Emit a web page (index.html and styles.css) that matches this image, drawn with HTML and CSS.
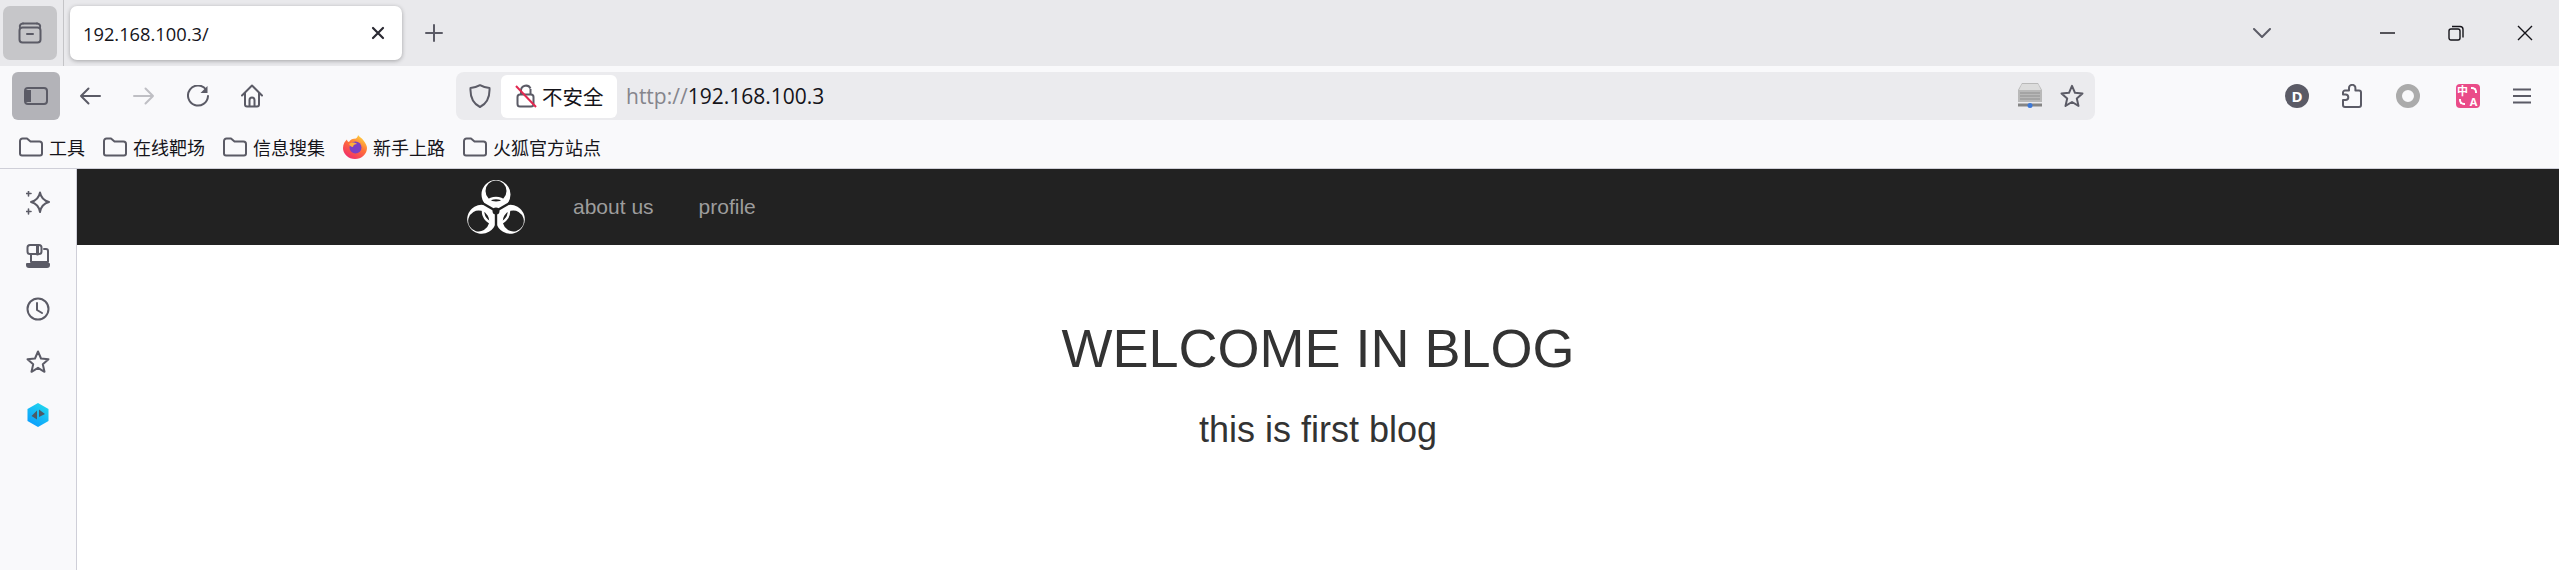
FILE: index.html
```html
<!DOCTYPE html>
<html lang="en">
<head>
    <meta charset="UTF-8">
    <title>192.168.100.3/</title>
    <link rel="stylesheet" href="styles.css">
</head>
<body>
    <!-- tab strip -->
    <div class="tabbar">
        <div class="tabs-btn">
            <svg width="24" height="24" viewBox="0 0 24 24" class="ico"><rect x="1.500" y="6.500" width="21" height="15" rx="3"/><path d="M5 2.500h14M9 13h6" /><path d="M5 2.500a3 3 0 0 0-3 4M19 2.500a3 3 0 0 1 3 4"/></svg>
        </div>
        <div class="tab">
            <span class="tab-title">192.168.100.3/</span>
            <svg width="14" height="14" viewBox="0 0 14 14" class="ico ico-dark"><path d="M2 2l10 10M12 2L2 12"/></svg>
        </div>
        <svg class="ico newtab" width="18" height="18" viewBox="0 0 18 18"><path d="M9 1v16M1 9h16"/></svg>
        <div class="spacer"></div>
        <svg class="ico chevron" width="18" height="10" viewBox="0 0 18 10"><path d="M1 1l8 8 8-8"/></svg>
        <svg class="win win-min" width="15" height="2" viewBox="0 0 15 2"><path d="M0 1h15"/></svg>
        <svg class="win win-max" width="16" height="16" viewBox="0 0 16 16"><rect x="1" y="4" width="11" height="11" rx="2"/><path d="M4 1.500h8a3 3 0 0 1 3 3v8"/></svg>
        <svg class="win win-close" width="16" height="16" viewBox="0 0 16 16"><path d="M1 1l14 14M15 1L1 15"/></svg>
    </div>

    <!-- nav toolbar -->
    <div class="toolbar">
        <div class="sidebar-btn">
            <svg width="24" height="18" viewBox="0 0 24 18"><rect x="1" y="1" width="22" height="16" rx="3" fill="#b3b3b8" stroke="#5b5b66" stroke-width="2"/><path d="M2 3h5v12H2z" fill="#5b5b66"/></svg>
        </div>
        <div class="nav-btn"><svg class="ico" width="22" height="18" viewBox="0 0 22 18"><path d="M21 9H2M9.500 1.500L2 9l7.500 7.500"/></svg></div>
        <div class="nav-btn"><svg class="ico ico-off" width="22" height="18" viewBox="0 0 22 18"><path d="M1 9h19M12.500 1.500L20 9l-7.500 7.500"/></svg></div>
        <div class="nav-btn"><svg class="ico" width="22" height="22" viewBox="0 0 22 22"><path d="M19 4.500A10 10 0 1 0 21 11"/><path d="M20.500 1v7h-7z" fill="#5b5b66" stroke="none"/></svg></div>
        <div class="nav-btn"><svg class="ico" width="22" height="24" viewBox="0 0 22 24"><path d="M1 11.500L11 1.500l10 10M4 9v11.500a2 2 0 0 0 2 2h10a2 2 0 0 0 2-2V9M8.500 22.500V16a2.500 2.500 0 0 1 5 0v6.500"/></svg></div>

        <div class="urlbar">
            <svg class="ico shield" width="22" height="24" viewBox="0 0 22 24"><path d="M11 1.200c3 1.800 6 2.600 9.500 2.800.4 8-1.500 15-9.500 19C3 19 1.100 12 1.500 4 5 3.800 8 3 11 1.200z"/></svg>
            <div class="chip">
                <svg width="22" height="24" viewBox="0 0 22 24"><path d="M6 10V6.500a5 5 0 0 1 9.500-2" fill="none" stroke="#5b5b66" stroke-width="2"/><path d="M15.500 5v5" fill="none" stroke="#5b5b66" stroke-width="2"/><rect x="2.500" y="10.500" width="16" height="12" rx="2.500" fill="none" stroke="#5b5b66" stroke-width="2"/><path d="M1 2l20 21" stroke="#e22850" stroke-width="2"/></svg>
                <span>不安全</span>
            </div>
            <span class="url"><span class="url-scheme">http://</span>192.168.100.3</span>
            <div class="spacer"></div>
            <svg class="server" width="24" height="26" viewBox="0 0 24 26">
                <path d="M4 0h16l4 7v12H0V7z" fill="#b9b9b9"/>
                <path d="M4 1h16l3 6H1z" fill="#dcdcdc"/>
                <path d="M2 10h20M2 13h20M2 16h20" stroke="#8f8f8f" stroke-width="1"/>
                <rect x="0" y="20.500" width="24" height="3" fill="#858585"/>
                <circle cx="12" cy="22.500" r="2.500" fill="#3b78d8"/>
            </svg>
            <svg class="ico star" width="24" height="24" viewBox="0 0 24 24"><path d="M12 1.800l3 7 7.500.7-5.700 5 1.700 7.400-6.500-3.900-6.500 3.900 1.700-7.400-5.700-5L9 8.800z"/></svg>
        </div>

        <div class="ext ext-account">D</div>
        <svg class="ext ico" width="20" height="24" viewBox="0 0 20 24"><path d="M7 6.500V4a3.200 3.200 0 0 1 6.400 0v2.500h3.600a2 2 0 0 1 2 2V21a2 2 0 0 1-2 2H3a2 2 0 0 1-2-2v-5h2.500a2.800 2.800 0 0 0 0-5.600H1V8.500a2 2 0 0 1 2-2z"/></svg>
        <div class="ext ext-ring"></div>
        <div class="ext ext-translate">
            <span class="tr-zh">中</span>
            <span class="tr-en">A</span>
        </div>
        <svg class="ext ico menu" width="18" height="16" viewBox="0 0 18 16"><path d="M0 1.500h18M0 8h18M0 14.500h18"/></svg>
    </div>

    <!-- bookmarks -->
    <div class="bookmarks">
        <a class="bookmark"><svg class="ico folder" width="24" height="20" viewBox="0 0 24 20"><path d="M1 4a2.500 2.500 0 0 1 2.500-2.500h4.500l3.500 3h9a2.500 2.500 0 0 1 2.500 2.500v9.500a2 2 0 0 1-2 2H3a2 2 0 0 1-2-2z"/></svg>工具</a>
        <a class="bookmark"><svg class="ico folder" width="24" height="20" viewBox="0 0 24 20"><path d="M1 4a2.500 2.500 0 0 1 2.500-2.500h4.500l3.500 3h9a2.500 2.500 0 0 1 2.500 2.500v9.500a2 2 0 0 1-2 2H3a2 2 0 0 1-2-2z"/></svg>在线靶场</a>
        <a class="bookmark"><svg class="ico folder" width="24" height="20" viewBox="0 0 24 20"><path d="M1 4a2.500 2.500 0 0 1 2.500-2.500h4.500l3.500 3h9a2.500 2.500 0 0 1 2.500 2.500v9.500a2 2 0 0 1-2 2H3a2 2 0 0 1-2-2z"/></svg>信息搜集</a>
        <a class="bookmark"><svg class="firefox" width="24" height="24" viewBox="0 0 24 24">
            <defs>
                <linearGradient id="fx" x1="0.800" y1="0" x2="0.200" y2="1"><stop offset="0" stop-color="#ffdc3e"/><stop offset="0.450" stop-color="#ff7139"/><stop offset="1" stop-color="#f0266f"/></linearGradient>
            </defs>
            <path d="M15 0c1 2 4 3 5.500 5.500C23 8.500 24 11 24 13a12 11 0 0 1-24 0C0 9 2 6 4 4.500 4 6 5 7 6 7c1-2.500 4-3.500 7-3.500C14 2.500 15 1.500 15 0z" fill="url(#fx)"/>
            <circle cx="12.500" cy="12.500" r="6" fill="#7b3fc4"/>
            <path d="M6 9c2-2 6-2 8 0-2 0-4 1-4 3-2 0-3-1-4-3z" fill="#ffb03a"/>
        </svg>新手上路</a>
        <a class="bookmark"><svg class="ico folder" width="24" height="20" viewBox="0 0 24 20"><path d="M1 4a2.500 2.500 0 0 1 2.500-2.500h4.500l3.500 3h9a2.500 2.500 0 0 1 2.500 2.500v9.500a2 2 0 0 1-2 2H3a2 2 0 0 1-2-2z"/></svg>火狐官方站点</a>
    </div>

    <div class="browser-body">
        <!-- firefox sidebar -->
        <div class="sidebar">
            <div class="side-item"><svg class="ico" width="24" height="24" viewBox="0 0 24 24"><path d="M14 1.500c1 5.500 3.500 8 9 9.500-5.500 1.500-8 4-9 10-1-6-3.500-8.500-9-10 5.500-1.500 8-4 9-9.500z"/><path d="M2.500 0v5M0 2.500h5M2.500 18v5M0 20.500h5" stroke-width="1.600"/></svg></div>
            <div class="side-item"><svg class="ico" width="24" height="24" viewBox="0 0 24 24"><rect x="1.500" y="1" width="14" height="9" rx="2.500"/><path d="M11.500 1v9" stroke-width="3"/><path d="M18 5h2a2 2 0 0 1 2 2v11H5v-8"/><path d="M1 20h22v1a2 2 0 0 1-2 2H3a2 2 0 0 1-2-2z" fill="#5b5b66"/></svg></div>
            <div class="side-item"><svg class="ico" width="24" height="24" viewBox="0 0 24 24"><circle cx="12" cy="12" r="10.500"/><path d="M11 6v7l5 3"/></svg></div>
            <div class="side-item"><svg class="ico" width="24" height="24" viewBox="0 0 24 24"><path d="M12 1.500l3 7 7.500.7-5.700 5 1.700 7.600-6.500-4-6.500 4 1.700-7.600-5.700-5L9 8.500z"/></svg></div>
            <div class="side-item"><svg width="22" height="24" viewBox="0 0 22 24">
                <defs><linearGradient id="hx" x1="0.800" y1="0" x2="0.200" y2="1"><stop offset="0" stop-color="#22d8ec"/><stop offset="1" stop-color="#0a9bff"/></linearGradient></defs>
                <path d="M11 0l10.500 6v12L11 24 .5 18V6z" fill="url(#hx)"/>
                <path d="M10 7.500v9L4.500 13zM12 6.500l6 4.500-6 3z" fill="#4d5a66"/>
            </svg></div>
        </div>

        <!-- the page itself -->
        <div class="page">
            <nav class="site-nav">
                <svg class="logo" width="58" height="54" viewBox="0 0 58 54">
                    <defs>
                        <path id="lobe" fill="#fff" fill-rule="evenodd" d="M-14.500-16.500a14.500 14.500 0 1 0 29 0a14.500 14.500 0 1 0-29 0zM-10.500-20a10.500 10.500 0 1 0 21 0a10.500 10.500 0 1 0-21 0z"/>
                        <path id="gap" d="M0 0V-18" stroke="#222" stroke-width="2.400"/>
                    </defs>
                    <g transform="translate(29 31)">
                        <use href="#lobe"/>
                        <use href="#lobe" transform="rotate(120)"/>
                        <use href="#lobe" transform="rotate(240)"/>
                        <circle r="13" fill="none" stroke="#fff" stroke-width="2.500"/>
                        <use href="#gap" transform="rotate(60)"/>
                        <use href="#gap" transform="rotate(180)"/>
                        <use href="#gap" transform="rotate(300)"/>
                        <circle r="3.500" fill="#222"/>
                    </g>
                </svg>
                <a class="site-link">about us</a>
                <a class="site-link">profile</a>
            </nav>
            <div class="welcome">
                <h1>WELCOME IN BLOG</h1>
                <p>this is first blog</p>
            </div>
        </div>
    </div>
</body>
</html>
```

FILE: styles.css
```css
* { box-sizing: border-box; }
html, body { margin: 0; height: 570px; overflow: hidden; }
body { font-family: "Open Sans", "Noto Sans CJK SC", sans-serif; background: #f9f9fb; color: #15141a; }
svg { display: block; flex: none; }
.spacer { flex: 1; }

.ico { fill: none; stroke: #5b5b66; stroke-width: 2; stroke-linecap: round; stroke-linejoin: round; }
.ico-dark { stroke: #2b2a33; stroke-width: 2.2; }
.ico-off { stroke: #bfbfc4; }

.tabbar { height: 66px; background: #e9e9ec; display: flex; align-items: center; padding-left: 3px; }
.tabs-btn { width: 54px; height: 54px; border-radius: 7px; background: #c6c6c9; display: flex; align-items: center; justify-content: center; margin-right: 13px; position: relative; }
.tabs-btn::after { content: ""; position: absolute; right: -7px; top: -6px; width: 1px; height: 66px; background: #c4c4c7; }
.tab { width: 332px; height: 54px; background: #fff; border-radius: 7px; box-shadow: 0 1px 4px rgba(0, 0, 0, .3); display: flex; align-items: center; justify-content: space-between; padding: 0 17px 0 13px; font-size: 18.300px; }
.newtab { margin-left: 23px; }
.chevron { margin-right: 109px; }
.win { fill: none; stroke: #15141a; stroke-width: 1.400; }
.win-min { margin-right: 53px; }
.win-max { margin-right: 53px; }
.win-close { margin-right: 26px; }

.toolbar { height: 60px; display: flex; align-items: center; padding-left: 12px; }
.sidebar-btn { width: 48px; height: 48px; border-radius: 6px; background: #b3b3b8; display: flex; align-items: center; justify-content: center; margin-right: 3px; }
.nav-btn { width: 54px; display: flex; justify-content: center; }
.urlbar { width: 1639px; height: 48px; margin-left: 177px; background: #ebebee; border-radius: 8px; display: flex; align-items: center; padding-left: 13px; }
.shield { margin-right: 10px; }
.chip { width: 116px; height: 43px; background: #fff; border-radius: 6px; display: flex; align-items: center; gap: 5px; padding-left: 14px; font-size: 20.500px; }
.url { margin-left: 9px; font-size: 21px; }
.url-scheme { color: #85858c; }
.server { margin-right: 18px; }
.star { margin-right: 11px; }

.ext { flex: none; }
.ext-account { width: 24px; height: 24px; margin-left: 190px; border-radius: 50%; background: #5b5b66; color: #fff; font-size: 15px; font-weight: 700; line-height: 24px; text-align: center; }
.ext + svg.ext { margin-left: 33px; }
.ext-ring { width: 24px; height: 24px; margin-left: 34px; border-radius: 50%; border: 6px solid #ababab; }
.ext-translate { width: 24px; height: 24px; margin-left: 36px; padding: 1px; border-radius: 4px; background: #ea4c89; color: #fff; font-weight: 700; display: grid; grid-template-columns: 11px 11px; grid-template-rows: 11px 11px; font-size: 11px; line-height: 11px; text-align: center; }
.ext-translate::before { content: ""; grid-column: 2; grid-row: 1; margin: 2px 2px 3px 3px; border: solid #fff; border-width: 2px 2px 0 0; border-top-right-radius: 5px; }
.ext-translate::after { content: ""; grid-column: 1; grid-row: 2; margin: 3px 3px 2px 2px; border: solid #fff; border-width: 0 0 2px 2px; border-bottom-left-radius: 5px; }
.tr-zh { grid-column: 1; grid-row: 1; }
.tr-en { grid-column: 2; grid-row: 2; }
.ext.menu { margin-left: 36px; }

.bookmarks { height: 43px; display: flex; align-items: center; padding: 0 0 1px 19px; font-size: 18px; gap: 18px; border-bottom: 1px solid #cfcfd8; }
.bookmark { display: flex; align-items: center; gap: 6px; }

.browser-body { display: flex; height: 401px; }
.sidebar { width: 77px; border-right: 1px solid #cfcfd8; padding-top: 7px; flex: none; }
.side-item { height: 53px; display: flex; align-items: center; justify-content: center; }

.page { flex: 1; background: #fff; font-family: "Liberation Sans", Arial, sans-serif; color: #333; }
.site-nav { height: 76px; background: #222; display: flex; align-items: center; padding-left: 390px; }
.logo { margin-right: 48px; }
.site-link { color: #9d9d9d; font-size: 21px; margin-right: 45px; }
.welcome { text-align: center; padding-top: 70px; }
.welcome h1 { margin: 0; font-size: 54px; font-weight: 400; line-height: 66px; }
.welcome p { margin: 29px 0 0; font-size: 36px; line-height: 40px; }
```
